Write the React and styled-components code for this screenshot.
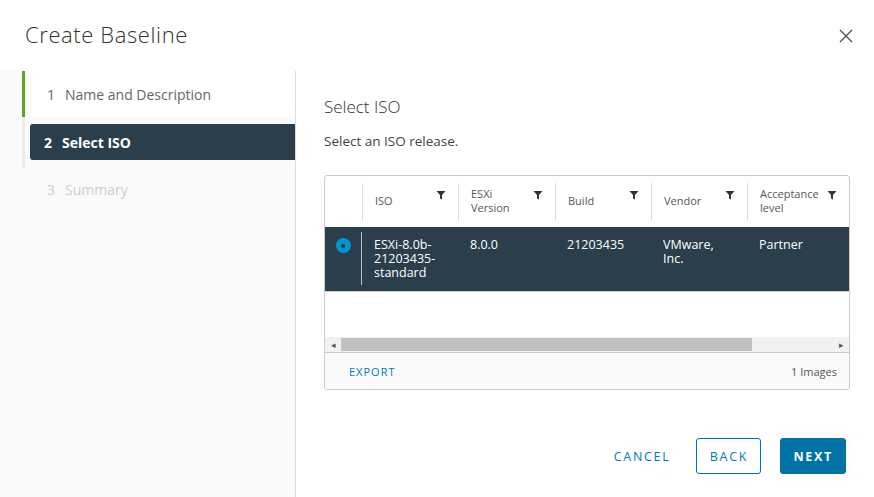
import React from 'react';
import styled, { createGlobalStyle } from 'styled-components';

const GlobalStyle = createGlobalStyle`
    html, body {
        margin: 0;
        padding: 0;
        background: #ffffff;
    }
    body {
        font-family: "Open Sans", "Liberation Sans", sans-serif;
        color: #565656;
    }
`;

const steps = [
    { num: 1, label: 'Name and Description', state: 'done' },
    { num: 2, label: 'Select ISO', state: 'active' },
    { num: 3, label: 'Summary', state: 'todo' },
];

const columns = [
    { key: 'iso', title: 'ISO' },
    { key: 'version', title: ['ESXi', 'Version'] },
    { key: 'build', title: 'Build' },
    { key: 'vendor', title: 'Vendor' },
    { key: 'level', title: ['Acceptance', 'level'] },
];

const rows = [
    {
        id: 1,
        iso: ['ESXi-8.0b-', '21203435-', 'standard'],
        version: '8.0.0',
        build: '21203435',
        vendor: ['VMware,', 'Inc.'],
        level: 'Partner',
    },
];

const FilterIcon = () => (
    <svg width="10" height="10" viewBox="0 0 10 10">
        <path d="M0.5 1 H9.5 L6 5 V9.5 L4 8.5 V5 Z" fill="#333" />
    </svg>
);

const CloseIcon = () => (
    <svg width="16" height="16" viewBox="0 0 16 16">
        <path d="M2 2 L14 14 M14 2 L2 14" stroke="#555" strokeWidth="1.4" />
    </svg>
);

const Lines = ({ value }) =>
    Array.isArray(value) ? value.map((v, i) => <div key={i}>{v}</div>) : value;

const App = () => {
    return (
        <>
            <GlobalStyle />
            <Modal>
                <Header>
                    <Title>Create Baseline</Title>
                    <CloseButton aria-label="Close">
                        <CloseIcon />
                    </CloseButton>
                </Header>
                <Body>
                    <Sidebar>
                        {steps.map(step => (
                            <StepRow key={step.num} $state={step.state}>
                                <Step $state={step.state}>
                                    <StepNum>{step.num}</StepNum>
                                    {step.label}
                                </Step>
                            </StepRow>
                        ))}
                    </Sidebar>
                    <Content>
                        <PageTitle>Select ISO</PageTitle>
                        <Description>Select an ISO release.</Description>
                        <Grid>
                            <HeadRow>
                                <SelectCell />
                                {columns.map(col => (
                                    <HeadCell key={col.key}>
                                        <HeadLabel>
                                            <Lines value={col.title} />
                                        </HeadLabel>
                                        <FilterIcon />
                                    </HeadCell>
                                ))}
                            </HeadRow>
                            {rows.map(row => (
                                <DataRow key={row.id}>
                                    <SelectCell $body>
                                        <Radio />
                                    </SelectCell>
                                    {columns.map(col => (
                                        <DataCell key={col.key}>
                                            <Lines value={row[col.key]} />
                                        </DataCell>
                                    ))}
                                </DataRow>
                            ))}
                            <EmptyArea />
                            <ScrollBar>
                                <ScrollArrow>◂</ScrollArrow>
                                <ScrollTrack>
                                    <ScrollThumb />
                                </ScrollTrack>
                                <ScrollArrow>▸</ScrollArrow>
                            </ScrollBar>
                            <GridFooter>
                                <ExportLink>EXPORT</ExportLink>
                                <Count>1 Images</Count>
                            </GridFooter>
                        </Grid>
                        <Actions>
                            <Button $variant="link">CANCEL</Button>
                            <Button $variant="outline">BACK</Button>
                            <Button $variant="primary">NEXT</Button>
                        </Actions>
                    </Content>
                </Body>
            </Modal>
        </>
    );
};

const Modal = styled.div`
    width: 874px;
    height: 497px;
    display: flex;
    flex-direction: column;
    background: #fff;
    overflow: hidden;
`;

const Header = styled.div`
    height: 71px;
    flex-shrink: 0;
    display: flex;
    align-items: center;
    justify-content: space-between;
    padding: 0 20px 0 25px;
    box-sizing: border-box;
`;

const Title = styled.h1`
    margin: 0;
    margin-top: -4px;
    font-size: 22px;
    font-weight: 300;
    color: #333;
    letter-spacing: 0.6px;
`;

const CloseButton = styled.button`
    border: none;
    background: none;
    padding: 0;
    display: flex;
    cursor: pointer;
`;

const Body = styled.div`
    flex: 1;
    display: flex;
    min-height: 0;
`;

const Sidebar = styled.nav`
    width: 296px;
    flex-shrink: 0;
    background: #fafafa;
    border-right: 1px solid #dcdcdc;
    padding-left: 22px;
    box-sizing: border-box;
`;

const StepRow = styled.div`
    border-left: 3px solid ${p => (p.$state === 'todo' ? 'transparent' : '#ececec')};
    padding-bottom: ${p => (p.$state === 'done' ? '7px' : p.$state === 'active' ? '8px' : '0')};
`;

const Step = styled.div`
    display: flex;
    align-items: center;
    font-size: 14px;
    color: ${p => (p.$state === 'active' ? '#fff' : p.$state === 'todo' ? '#cfcfcf' : '#666')};
    font-weight: ${p => (p.$state === 'active' ? 700 : 400)};
    height: ${p => (p.$state === 'active' ? '36px' : p.$state === 'todo' ? '42px' : '46px')};
    background: ${p => (p.$state === 'active' ? '#2b3e4b' : p.$state === 'done' ? '#fff' : 'transparent')};
    padding-left: ${p => (p.$state === 'active' ? '14px' : '22px')};
    margin-left: ${p => (p.$state === 'active' ? '5px' : p.$state === 'done' ? '-3px' : '0')};
    border-left: ${p => (p.$state === 'done' ? '3px solid #62a420' : 'none')};
    border-radius: ${p => (p.$state === 'active' ? '3px 0 0 3px' : '0')};
`;

const StepNum = styled.span`
    width: 18px;
`;

const Content = styled.div`
    flex: 1;
    padding: 24px 24px 0 28px;
    display: flex;
    flex-direction: column;
`;

const PageTitle = styled.h2`
    margin: 0;
    font-size: 17px;
    font-weight: 300;
    color: #333;
    line-height: 24px;
`;

const Description = styled.p`
    margin: 12px 0 0;
    font-size: 13.5px;
    color: #444;
    line-height: 20px;
`;

const Grid = styled.div`
    margin-top: 24px;
    width: 526px;
    box-sizing: border-box;
    border: 1px solid #ccc;
    border-radius: 3px;
    display: flex;
    flex-direction: column;
    overflow: hidden;
`;

const rowLayout = `
    display: grid;
    grid-template-columns: 37px 96px 97px 96px 96px 1fr;
`;

const HeadRow = styled.div`
    ${rowLayout}
    height: 51px;
    align-items: center;
`;

const SelectCell = styled.div`
    height: ${p => (p.$body ? '53px' : '38px')};
    border-right: 1px solid ${p => (p.$body ? '#b9c2c8' : 'transparent')};
    display: flex;
    justify-content: center;
    padding-top: ${p => (p.$body ? '6px' : '0')};
    box-sizing: border-box;
    align-self: ${p => (p.$body ? 'start' : 'center')};
`;

const HeadCell = styled.div`
    display: flex;
    align-items: flex-start;
    justify-content: space-between;
    border-left: 1px solid #ddd;
    height: 38px;
    padding: 4px 12px 0 12px;
    box-sizing: border-box;
    font-size: 11px;
    color: #565656;
    line-height: 14px;

    svg {
        margin-top: 3px;
        flex-shrink: 0;
    }
`;

const HeadLabel = styled.div`
    min-height: 28px;
    display: flex;
    flex-direction: column;
    justify-content: center;
`;

const DataRow = styled.div`
    ${rowLayout}
    background: #2b3e4b;
    height: 64px;
    align-items: start;
    padding-top: 5px;
    box-sizing: border-box;
`;

const DataCell = styled.div`
    color: #fff;
    font-size: 12.5px;
    line-height: 14px;
    padding: 6px 12px 0 12px;
`;

const Radio = styled.span`
    width: 15px;
    height: 15px;
    border-radius: 50%;
    background: #0095d3;
    box-sizing: border-box;
    display: flex;
    align-items: center;
    justify-content: center;

    &::after {
        content: '';
        width: 4px;
        height: 4px;
        border-radius: 50%;
        background: #1a3242;
    }
`;

const EmptyArea = styled.div`
    height: 45px;
    border-top: 1px solid #ccc;
`;

const ScrollBar = styled.div`
    display: flex;
    align-items: center;
    height: 15px;
    background: #f1f1f1;
`;

const ScrollArrow = styled.span`
    width: 16px;
    font-size: 9px;
    color: #555;
    text-align: center;
    line-height: 15px;
`;

const ScrollTrack = styled.div`
    flex: 1;
    height: 13px;
    display: flex;
`;

const ScrollThumb = styled.div`
    width: 411px;
    background: #c1c1c1;
`;

const GridFooter = styled.div`
    display: flex;
    align-items: center;
    justify-content: space-between;
    height: 36px;
    border-top: 1px solid #ccc;
    padding: 0 12px 0 24px;
    background: #fafafa;
`;

const ExportLink = styled.span`
    font-size: 11px;
    color: #0079b8;
    letter-spacing: 1px;
    font-weight: 500;
`;

const Count = styled.span`
    font-size: 11px;
    color: #565656;
`;

const Actions = styled.div`
    display: flex;
    justify-content: flex-end;
    align-items: center;
    gap: 19px;
    margin-top: 48px;
    width: 522px;
`;

const Button = styled.button`
    height: 36px;
    padding: 0 ${p => (p.$variant === 'link' ? '6px' : '12px')};
    min-width: ${p => (p.$variant === 'link' ? '0' : '65px')};
    font-family: inherit;
    font-size: 12.5px;
    letter-spacing: 1.7px;
    border-radius: 3px;
    cursor: pointer;
    color: ${p => (p.$variant === 'primary' ? '#fff' : '#0079b8')};
    background: ${p => (p.$variant === 'primary' ? '#0072a3' : 'transparent')};
    border: 1px solid ${p => (p.$variant === 'link' ? 'transparent' : '#0072a3')};
    font-weight: ${p => (p.$variant === 'primary' ? 700 : 500)};
`;

export default App;
